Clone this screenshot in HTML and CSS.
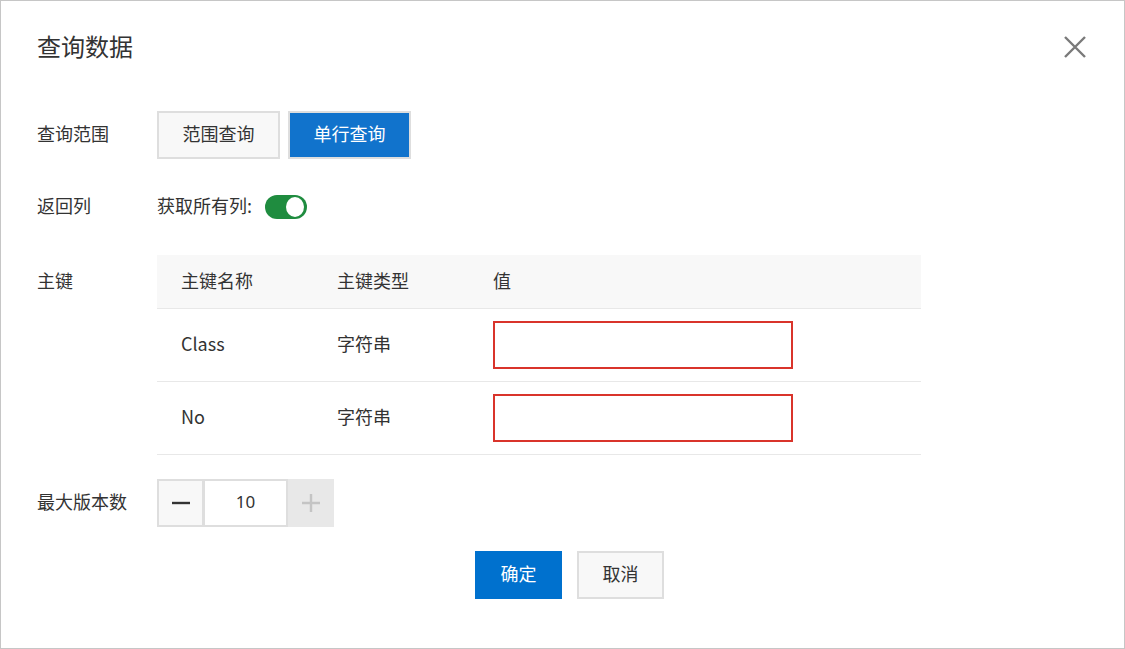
FILE: index.html
```html
<!DOCTYPE html>
<html lang="zh">
<head>
<meta charset="utf-8">
<link rel="stylesheet" href="styles.css">
</head>
<body>
<div class="dialog">
  <div class="header">
    <h1 class="title">查询数据</h1>
    <button class="close" aria-label="关闭">
      <svg width="22" height="22" viewBox="0 0 22 22"><path d="M1 1L21 21M21 1L1 21" stroke="#7a7a7a" stroke-width="2.4" fill="none"/></svg>
    </button>
  </div>
  <div class="form">
    <div class="row row-range">
      <div class="label">查询范围</div>
      <div class="seg">
        <button class="seg-btn">范围查询</button>
        <button class="seg-btn active">单行查询</button>
      </div>
    </div>
    <div class="row row-cols">
      <div class="label">返回列</div>
      <div class="toggle-wrap">
        <span>获取所有列:</span>
        <span class="toggle"><span class="knob"></span></span>
      </div>
    </div>
    <div class="row row-keys">
      <div class="label label-keys">主键</div>
      <div class="table">
        <div class="tr th">
          <div class="c1">主键名称</div>
          <div class="c2">主键类型</div>
          <div class="c3">值</div>
        </div>
        <div class="tr">
          <div class="c1">Class</div>
          <div class="c2">字符串</div>
          <div class="c3"><div class="input err"></div></div>
        </div>
        <div class="tr">
          <div class="c1">No</div>
          <div class="c2">字符串</div>
          <div class="c3"><div class="input err"></div></div>
        </div>
      </div>
    </div>
    <div class="row row-ver">
      <div class="label">最大版本数</div>
      <div class="num">
        <button class="num-btn minus"><svg width="18" height="18" viewBox="0 0 18 18"><path d="M0 9H18" stroke="#333" stroke-width="2.4"/></svg></button>
        <div class="num-val">10</div>
        <button class="num-btn plus"><svg width="18" height="18" viewBox="0 0 18 18"><path d="M0 9H18M9 0V18" stroke="#c4c4c4" stroke-width="2.4"/></svg></button>
      </div>
    </div>
  </div>
  <div class="footer">
    <button class="btn primary">确定</button>
    <button class="btn">取消</button>
  </div>
</div>
</body>
</html>
```
FILE: styles.css
```css
html, body {
  margin: 0;
  padding: 0;
  background: #fff;
}
body {
  font-family: "Noto Sans CJK SC", "Noto Sans", sans-serif;
  font-size: 18px;
  line-height: 1.3;
  color: #333;
}
button {
  font-family: inherit;
  font-size: inherit;
  line-height: inherit;
  color: inherit;
  cursor: pointer;
  padding: 0;
}
.dialog {
  width: 1125px;
  height: 649px;
  box-sizing: border-box;
  border: 1px solid #c6c6c6;
}
.header {
  display: flex;
  justify-content: space-between;
  align-items: center;
  padding: 31px 38px 0 36px;
  height: 30px;
}
.title {
  margin: 0;
  font-size: 24px;
  font-weight: 400;
  line-height: 30px;
  color: #333;
  position: relative;
  top: -1px;
}
.close {
  border: 0;
  background: transparent;
  width: 22px;
  height: 22px;
  display: flex;
}
.form {
  margin-top: 49px;
  padding-left: 36px;
  display: flex;
  flex-direction: column;
}
.row {
  display: flex;
  align-items: center;
}
.label {
  width: 120px;
  flex: none;
  padding-bottom: 2px;
}
.seg {
  display: flex;
  gap: 8px;
}
.seg-btn {
  width: 123px;
  height: 48px;
  box-sizing: border-box;
  border: 2px solid #dedede;
  background: #f8f8f8;
  color: #333;
  padding-bottom: 2px;
}
.seg-btn.active {
  background: #1173cc;
  color: #fff;
}
.row-cols {
  margin-top: 36px;
  height: 24px;
}
.toggle-wrap {
  display: flex;
  align-items: center;
  gap: 13px;
}
.toggle-wrap span:first-child {
  padding-bottom: 2px;
}
.toggle {
  width: 42px;
  height: 24px;
  border-radius: 12px;
  background: #1f8c3f;
  display: flex;
  align-items: center;
  justify-content: flex-end;
  padding: 0 3px;
  box-sizing: border-box;
}
.knob {
  width: 18px;
  height: 18px;
  border-radius: 50%;
  background: #fff;
}
.row-keys {
  margin-top: 36px;
  align-items: flex-start;
}
.label-keys {
  line-height: 50px;
}
.table {
  width: 764px;
}
.tr {
  display: flex;
  align-items: center;
  height: 73px;
  box-sizing: border-box;
  border-bottom: 1px solid #e8e8e8;
}
.tr.th {
  height: 54px;
  background: #f8f8f8;
}
.c1, .c2 {
  width: 156px;
  padding-left: 24px;
  padding-bottom: 2px;
  box-sizing: border-box;
}
.c3 {
  padding-left: 24px;
  flex: 1;
}
.th .c3 {
  padding-bottom: 2px;
}
.input {
  width: 300px;
  height: 48px;
  box-sizing: border-box;
  border: 2px solid #d9342b;
  background: #fff;
}
.row-ver {
  margin-top: 24px;
}
.num {
  display: flex;
  height: 48px;
}
.num-btn {
  width: 47px;
  height: 48px;
  box-sizing: border-box;
  display: flex;
  align-items: center;
  justify-content: center;
}
.minus {
  border: 2px solid #dedede;
  background: #f8f8f8;
}
.plus {
  border: 0;
  background: #e8e8e8;
  width: 46px;
  cursor: not-allowed;
}
.num-val {
  width: 84px;
  height: 48px;
  box-sizing: border-box;
  border: 2px solid #dedede;
  border-left-width: 1px;
  display: flex;
  align-items: center;
  justify-content: center;
  font-family: "Noto Sans", "Open Sans", sans-serif;
  font-size: 17px;
  padding-bottom: 2px;
}
.footer {
  margin-top: 24px;
  display: flex;
  justify-content: center;
  gap: 15px;
  padding-left: 14px;
}
.btn {
  width: 87px;
  height: 48px;
  box-sizing: border-box;
  border: 2px solid #dedede;
  background: #f8f8f8;
  color: #333;
  padding-bottom: 2px;
}
.btn.primary {
  border: 0;
  background: #0071ce;
  color: #fff;
}
```
